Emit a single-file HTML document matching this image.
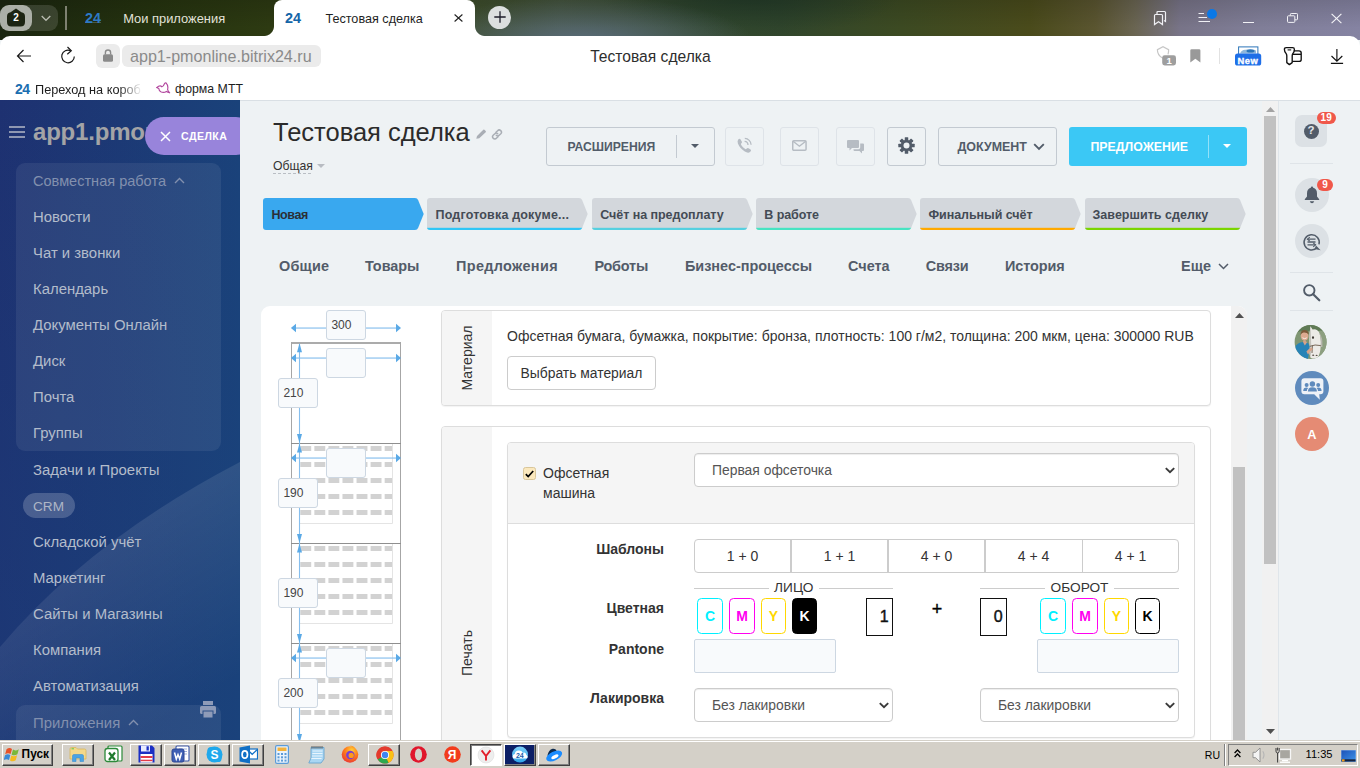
<!DOCTYPE html>
<html lang="ru">
<head>
<meta charset="utf-8">
<title>Тестовая сделка</title>
<style>
*{box-sizing:border-box;margin:0;padding:0}
html,body{width:1360px;height:768px;overflow:hidden;background:#eef2f4;font-family:"Liberation Sans",sans-serif;}
body{position:relative}
.abs{position:absolute}
.t{position:absolute;white-space:nowrap;line-height:1}
.f{position:absolute;white-space:nowrap;font-size:14px;line-height:20px;color:#333}
.dv{font-family:"DejaVu Sans Condensed","DejaVu Sans","Liberation Sans",sans-serif}
.ls{font-family:"Liberation Sans",sans-serif}

/* ===== browser chrome ===== */
#titlebar{left:0;top:0;width:1360px;height:40px;
 background:
  linear-gradient(180deg,rgba(0,0,0,.14) 0,rgba(0,0,0,0) 70%),
  radial-gradient(ellipse 170px 48px at 585px 44px, rgba(92,110,128,.95), rgba(92,110,128,0) 100%),
  radial-gradient(ellipse 150px 40px at 750px -4px, rgba(34,58,40,.9), rgba(34,58,40,0) 100%),
  linear-gradient(90deg,#1b2610 0px,#25330f 150px,#2d3a12 270px,#3d4d2c 480px,#43533a 560px,#34492f 700px,#31462c 780px,#3c4a22 900px,#4a4b1b 1030px,#5a5530 1095px,#6a6552 1135px,#787488 1180px,#807e98 1260px,#8583a2 1360px);}
#toolbar{left:0;top:36px;width:1360px;height:64px;background:#fff;border-radius:10px 10px 0 0}
#tab-active{left:274px;top:0;width:200px;height:40px;background:#fff;border-radius:0 0 0 0}
#pageline{left:0;top:100px;width:1360px;height:1px;background:#d9dfe4}

/* ===== sidebar ===== */
#sidebar{left:0;top:100px;width:240px;height:640px;overflow:hidden;
 background:linear-gradient(180deg,rgba(26,66,124,0) 0%,rgba(26,66,124,.45) 100%),linear-gradient(90deg,#1e3171 0%,#1c3975 50%,#1a427a 100%);}
.grp{position:absolute;left:16px;width:205px;background:rgba(255,255,255,.07);border-radius:9px}
.mi{position:absolute;left:33px;white-space:nowrap;line-height:1;color:#b3bccb;font-size:15px}

/* ===== main ===== */
#main{left:240px;top:101px;width:1022px;height:639px;background:#eef2f4}
#rightbar{left:1278px;top:101px;width:82px;height:639px;background:#eef2f4;border-left:1px solid #dfe5ea}

/* ===== taskbar ===== */
#taskbar{left:0;top:740px;width:1360px;height:28px;background:linear-gradient(#d4d0c8 0 1px,#fff 1px 2px,#d4d0c8 2px)}
.tb-btn{position:absolute;top:4px;height:22px;border:1px solid;border-color:#fff #404040 #404040 #fff;box-shadow:inset -1px -1px 0 #808080}
</style>
</head>
<body>
<div id="titlebar" class="abs"></div>
<div id="toolbar" class="abs"></div>
<div id="pageline" class="abs"></div>
<!-- ===== tab strip ===== -->
<div class="abs" style="left:0;top:5px;width:58px;height:26px;border-radius:9px;background:rgba(255,255,255,.13)"></div>
<div class="abs" style="left:0;top:5px;width:32px;height:26px;border-radius:9px;background:rgba(255,255,255,.58)"></div>
<svg class="abs" style="left:7px;top:8px" width="18" height="19" viewBox="0 0 18 19"><path d="M3.6 4.2 L9 0.6 L14.4 4.2 Q18 4.6 18 8.5 V14 Q18 18.6 13.5 18.6 H4.5 Q0 18.6 0 14 V8.5 Q0 4.6 3.6 4.2Z" fill="#1c2412"/></svg>
<span class="t" style="left:13.2px;top:12.8px;font-size:10px;font-weight:700;color:#fff">2</span>
<svg class="abs" style="left:41px;top:15px" width="10" height="7" viewBox="0 0 10 7"><path d="M0.7 1 L5 5.3 L9.3 1" fill="none" stroke="#b9bbb0" stroke-width="1.3"/></svg>
<div class="abs" style="left:65px;top:6px;width:1.6px;height:24px;background:#7e8171"></div>
<div class="abs" style="left:85px;top:22px;width:16px;height:1.4px;background:rgba(200,215,230,.25)"></div>
<span class="t" style="left:85px;top:10.8px;font-size:14.4px;font-weight:700;color:#2d7ac6">24</span>
<span class="t" style="left:123.2px;top:12.8px;font-size:12.9px;color:#e2e2d8">Мои приложения</span>
<!-- active tab -->
<div class="abs" style="left:274px;top:0;width:201px;height:40px;background:#fff;border-radius:8px 8px 0 0"></div>
<div class="abs" style="left:264px;top:26px;width:10px;height:10px;background:radial-gradient(circle at 0 0,rgba(255,255,255,0) 9.5px,#fff 10.5px)"></div>
<div class="abs" style="left:475px;top:26px;width:10px;height:10px;background:radial-gradient(circle at 100% 0,rgba(255,255,255,0) 9.5px,#fff 10.5px)"></div>
<span class="t" style="left:285px;top:10.6px;font-size:14.4px;font-weight:700;color:#1565a8">24</span>
<span class="t" style="left:325.4px;top:12.5px;font-size:12.63px;color:#1f1f1f">Тестовая сделка</span>
<svg class="abs" style="left:453.5px;top:14.4px" width="9" height="8" viewBox="0 0 9 8"><path d="M0.6 0.5 L8.4 7.5 M8.4 0.5 L0.6 7.5" stroke="#222" stroke-width="1.1"/></svg>
<div class="abs" style="left:488px;top:5.7px;width:23px;height:23px;border-radius:12px;background:#dcdfdf"></div>
<svg class="abs" style="left:493.5px;top:11.2px" width="12" height="12" viewBox="0 0 12 12"><path d="M6 0.3 V11.7 M0.3 6 H11.7" stroke="#1d1d2a" stroke-width="1.3"/></svg>
<!-- window controls -->
<svg class="abs" style="left:1152px;top:10px" width="16" height="16" viewBox="0 0 16 16"><path d="M5 4 V2.5 Q5 1.5 6 1.5 H12.5 Q13.5 1.5 13.5 2.5 V11.5 L12 10.5" fill="none" stroke="#f0f0f4" stroke-width="1.2"/><path d="M2.5 5.5 Q2.5 4.5 3.5 4.5 H9.5 Q10.5 4.5 10.5 5.5 V14.5 L6.5 11.8 L2.5 14.5Z" fill="none" stroke="#f0f0f4" stroke-width="1.2"/></svg>
<svg class="abs" style="left:1198px;top:11px" width="14" height="12" viewBox="0 0 14 12"><path d="M0.5 2.5 H6 M0.5 6.5 H9 M0.5 10.5 H12" stroke="#f0f0f5" stroke-width="1"/></svg>
<div class="abs" style="left:1206.5px;top:9px;width:10px;height:10px;border-radius:5px;background:#0a78e6"></div>
<div class="abs" style="left:1243px;top:22px;width:10.5px;height:1.2px;background:#f2f2f6"></div>
<svg class="abs" style="left:1287px;top:13px" width="11" height="10" viewBox="0 0 11 10"><path d="M3.4 2.6 V1.3 Q3.4 0.5 4.2 0.5 H9.7 Q10.5 0.5 10.5 1.3 V6 Q10.5 6.8 9.7 6.8 H8" fill="none" stroke="#f2f2f6" stroke-width="1"/><rect x="0.5" y="2.8" width="7.3" height="6.6" rx=".9" fill="none" stroke="#f2f2f6" stroke-width="1"/></svg>
<svg class="abs" style="left:1331px;top:13px" width="11" height="11" viewBox="0 0 11 11"><path d="M0.6 0.8 L10.4 10.2 M10.4 0.8 L0.6 10.2" stroke="#f4f4f8" stroke-width="1.15"/></svg>

<!-- ===== toolbar ===== -->
<svg class="abs" style="left:16px;top:49px" width="16" height="14" viewBox="0 0 16 14"><path d="M15 7 H1.5 M7.5 1 L1.5 7 L7.5 13" fill="none" stroke="#1a1a1a" stroke-width="1.2"/></svg>
<svg class="abs" style="left:60px;top:46px" width="16" height="18" viewBox="0 0 16 18"><path d="M14.3 10.5 A6.3 6.3 0 1 1 10.5 4.7" fill="none" stroke="#1a1a1a" stroke-width="1.2"/><path d="M7.5 1 L11.3 4.8 L7.3 8.2" fill="none" stroke="#1a1a1a" stroke-width="1.2"/></svg>
<div class="abs" style="left:96px;top:44px;width:24px;height:24px;border-radius:6px;background:#ebebeb"></div>
<svg class="abs" style="left:103px;top:49.3px" width="10" height="13" viewBox="0 0 10 13"><rect x="0" y="5.2" width="10" height="7.6" rx="1.6" fill="#8a8a8a"/><path d="M2.4 5.6 V3.6 a2.6 2.6 0 0 1 5.2 0 V5.6" fill="none" stroke="#8a8a8a" stroke-width="1.4"/></svg>
<div class="abs" style="left:122px;top:45px;width:199px;height:22px;border-radius:6px;background:#ebebeb"></div>
<span class="t" style="left:130px;top:48px;font-size:16.1px;color:#8a8a8a">app1-pmonline.bitrix24.ru</span>
<span class="t" style="left:590.2px;top:48.6px;font-size:15.62px;color:#2e2e2e">Тестовая сделка</span>
<!-- toolbar right icons -->
<svg class="abs" style="left:1156px;top:46px" width="21" height="20" viewBox="0 0 21 20"><path d="M7 12.3 Q1.2 9.5 1.4 3.6 L7 0.7 L12.6 3.6 Q12.7 6.5 12 8.4" fill="none" stroke="#c6c6c6" stroke-width="1.2"/><rect x="6.2" y="9.3" width="13.8" height="10.2" rx="2.4" fill="#9e9e9e"/></svg>
<span class="t" style="left:1166.6px;top:56.3px;font-size:9.5px;font-weight:700;color:#fff">1</span>
<svg class="abs" style="left:1189.8px;top:49.4px" width="11" height="14" viewBox="0 0 11 14"><path d="M0.3 1.6 Q0.3 0.3 1.6 0.3 H9.1 Q10.4 0.3 10.4 1.6 V13.4 L5.35 9.8 L0.3 13.4Z" fill="#999"/></svg>
<div class="abs" style="left:1219px;top:48px;width:1px;height:16px;background:#e2e2e2"></div>
<svg class="abs" style="left:1235px;top:45.5px" width="27" height="20" viewBox="0 0 27 20"><rect x="3.6" y="0.9" width="19.3" height="8" fill="#fff" stroke="#2b74b8" stroke-width="1"/><path d="M5 7.4 Q7 3.2 11 3.8 Q15 2 21 4.4 V7.4Z" fill="#8fb7dc"/><ellipse cx="15.5" cy="4.9" rx="4" ry="1.5" fill="#2b74b8"/><rect x="0" y="7.4" width="26.2" height="12.2" rx="2.6" fill="#1f6fe8"/></svg>
<span class="t" style="left:1237.6px;top:55.8px;font-size:9.4px;font-weight:700;color:#fff;letter-spacing:.45px;-webkit-text-stroke:.35px #fff">New</span>
<svg class="abs" style="left:1282.5px;top:46px" width="20" height="20" viewBox="0 0 20 20"><g fill="none" stroke="#111" stroke-width="1.35" stroke-linejoin="round"><path d="M3.2 1.6 H9.6 Q11.4 1.6 11.4 3.4 Q11.4 5.6 10 7.4 Q9.2 8.4 9.2 9.8 V16.6 L6.4 18.6 L3.8 16.6 V9.8 Q3.8 8.4 3 7.4 Q1.4 5.4 1.4 3.4 Q1.4 1.6 3.2 1.6Z"/><path d="M4.6 3.9 H8.2" stroke-width="1.1"/><path d="M10.8 4.8 H16 Q18.2 4.8 18.2 7 V13.4 Q18.2 15.4 16 15.4 H9.4"/><path d="M9.6 8.3 H18"/></g></svg>
<svg class="abs" style="left:1329.5px;top:48px" width="14" height="17" viewBox="0 0 14 17"><path d="M6.9 1 V13 M1.5 8 L6.9 13.2 L12.3 8 M0.9 15.3 H13.1" fill="none" stroke="#111" stroke-width="1.15"/></svg>

<!-- ===== bookmarks bar ===== -->
<span class="t" style="left:15px;top:81.5px;font-size:14px;font-weight:700;color:#1a6eb0;letter-spacing:-.6px">24</span>
<span class="t" style="left:35px;top:82px;font-size:12.73px;color:#1d1d1d;width:108px;overflow:hidden;height:15px;line-height:15px;-webkit-mask-image:linear-gradient(90deg,#000 78%,transparent 99%);mask-image:linear-gradient(90deg,#000 78%,transparent 99%)">Переход на короб</span>
<svg class="abs" style="left:156px;top:82px" width="15" height="13" viewBox="0 0 15 13"><path d="M0.6 5.6 L2.6 4.2 Q4.6 3.2 6 4.8 Q7.6 4.6 8.2 2.2 Q8.8 0.6 10 0.9 Q12.6 3.6 11.6 7.4 Q12 9.4 13.6 10.8 Q11.6 10.6 10.4 9.4 Q8 11 5.2 10 Q2.8 8.8 2.8 6.6 Z" fill="none" stroke="#b2479e" stroke-width="1.15" stroke-linejoin="round"/></svg>
<span class="t" style="left:175px;top:82.5px;font-size:12.34px;color:#1d1d1d">форма МТТ</span>

<div id="sidebar" class="abs">
<div class="abs" style="left:0;top:0;width:240px;height:640px;background:linear-gradient(150deg,rgba(255,255,255,.1) 62%,rgba(255,255,255,.0) 92%);clip-path:path('M0 547 Q90 440 240 362 V640 H0Z')"></div>
<div class="grp" style="top:63px;height:288px"></div>
<div class="grp" style="top:605px;height:60px"></div>
<div class="abs" style="left:9px;top:26px;width:16px;height:2px;background:#8e97b2"></div><div class="abs" style="left:9px;top:31px;width:16px;height:2px;background:#8e97b2"></div><div class="abs" style="left:9px;top:36px;width:16px;height:2px;background:#8e97b2"></div>
<span class="t" style="left:33px;top:20.1px;font-size:24px;font-weight:700;color:#a3a4a6;letter-spacing:-.2px">app1.pmonline</span>
<span class="mi" style="top:73.8px;font-size:14.54px;color:#8290ae">Совместная работа</span>
<svg class="abs" style="left:174px;top:77px" width="11" height="7" viewBox="0 0 11 7"><path d="M1 6 L5.5 1.5 L10 6" fill="none" stroke="#8290ae" stroke-width="1.4"/></svg>
<span class="mi" style="top:110.3px;font-size:14.9px">Новости</span>
<span class="mi" style="top:146.3px;font-size:14.9px">Чат и звонки</span>
<span class="mi" style="top:182.3px;font-size:14.9px">Календарь</span>
<span class="mi" style="top:218.3px;font-size:14.9px">Документы Онлайн</span>
<span class="mi" style="top:254.3px;font-size:14.9px">Диск</span>
<span class="mi" style="top:290.3px;font-size:14.9px">Почта</span>
<span class="mi" style="top:326.3px;font-size:14.9px">Группы</span>
<span class="mi" style="top:363.3px;font-size:14.9px">Задачи и Проекты</span>
<span class="mi" style="top:435.3px;font-size:14.9px">Складской учёт</span>
<span class="mi" style="top:471.3px;font-size:14.9px">Маркетинг</span>
<span class="mi" style="top:507.3px;font-size:14.9px">Сайты и Магазины</span>
<span class="mi" style="top:543.3px;font-size:14.9px">Компания</span>
<span class="mi" style="top:579.3px;font-size:14.9px">Автоматизация</span>
<div class="abs" style="left:23px;top:393px;width:52px;height:25px;border-radius:13px;background:rgba(255,255,255,.2)"></div>
<span class="mi" style="top:398.9px;font-size:13.6px;color:#aeb6c6;margin-top:1px">CRM</span>
<span class="mi" style="top:615.5px;font-size:14.92px;color:#8290ae">Приложения</span>
<svg class="abs" style="left:128px;top:619px" width="11" height="7" viewBox="0 0 11 7"><path d="M1 6 L5.5 1.5 L10 6" fill="none" stroke="#8290ae" stroke-width="1.4"/></svg>
<svg class="abs" style="left:200px;top:601px" width="16" height="17" viewBox="0 0 16 17"><rect x="3" y="0" width="10" height="4" fill="#8e9bb8"/><rect x="0" y="5" width="16" height="8" rx="1.5" fill="#8e9bb8"/><rect x="3" y="10" width="10" height="7" fill="#8e9bb8" stroke="#2a4f86" stroke-width="1"/></svg>
<div class="abs" style="left:145px;top:17px;width:110px;height:38px;border-radius:19px;background:#9884db"></div>
<svg class="abs" style="left:160px;top:31px" width="11" height="11" viewBox="0 0 11 11"><path d="M1 1 L10 10 M10 1 L1 10" stroke="#fff" stroke-width="1.5"/></svg>
<span class="t" style="left:181px;top:30.6px;font-size:10.6px;font-weight:700;color:#fff;letter-spacing:.45px">СДЕЛКА</span>
</div>
<div id="main" class="abs"></div>
<div id="rightbar" class="abs"></div>
<!--HDR-->
<span class="t" style="left:273.0px;top:119.8px;font-size:25.50px;color:#2b2b2b;">Тестовая сделка</span>
<svg class="abs" style="left:476px;top:129px" width="11" height="10" viewBox="0 0 11 10"><path d="M0.3 9.7 L1 7 L7.3 0.8 Q8 0.2 8.7 0.9 L9.7 1.9 Q10.3 2.6 9.7 3.2 L3.3 9.2 Z" fill="#a9aeb5"/></svg>
<svg class="abs" style="left:491px;top:128.5px" width="12" height="11" viewBox="0 0 12 11"><g fill="none" stroke="#a9aeb5" stroke-width="1.5" stroke-linecap="round"><path d="M5 3.2 L6.6 1.7 A2.1 2.1 0 0 1 9.8 4.7 L8.2 6.2 A2.1 2.1 0 0 1 5.3 6.3"/><path d="M7 7.8 L5.4 9.3 A2.1 2.1 0 0 1 2.2 6.3 L3.8 4.8 A2.1 2.1 0 0 1 6.7 4.7"/></g></svg>
<span class="t" style="left:273.0px;top:159.6px;font-size:12.23px;color:#333;">Общая</span>
<div class="abs" style="left:273px;top:172.5px;width:40px;height:1px;background:repeating-linear-gradient(90deg,#b9bec4 0 3px,transparent 3px 5px)"></div>
<svg class="abs" style="left:317px;top:164px" width="8" height="4" viewBox="0 0 8 4"><path d="M0 0 H8 L4 4Z" fill="#b8bcc2"/></svg>
<div class="abs" style="left:546px;top:127px;width:169px;height:39px;border:1px solid #c3cad1;border-radius:3px;background:transparent"></div>
<span class="t" style="left:567.4px;top:141.3px;font-size:12.18px;font-weight:700;color:#525c69;">РАСШИРЕНИЯ</span>
<div class="abs" style="left:676px;top:135px;width:1px;height:23px;background:#c3cad1"></div>
<svg class="abs" style="left:691px;top:144px" width="8" height="4" viewBox="0 0 8 4"><path d="M0 0 H8 L4 4Z" fill="#525c69"/></svg>
<div class="abs" style="left:725px;top:127px;width:39px;height:39px;border:1px solid #dee3e8;border-radius:3px;background:transparent"></div>
<div class="abs" style="left:780px;top:127px;width:39px;height:39px;border:1px solid #dee3e8;border-radius:3px;background:transparent"></div>
<div class="abs" style="left:836px;top:127px;width:39px;height:39px;border:1px solid #dee3e8;border-radius:3px;background:transparent"></div>
<div class="abs" style="left:887px;top:127px;width:39px;height:39px;border:1px solid #c3cad1;border-radius:3px;background:transparent"></div>
<svg class="abs" style="left:736px;top:137px" width="17" height="17" viewBox="0 0 17 17"><path d="M2.2 2.6 Q3.6 0.8 4.6 2.4 L5.9 4.7 Q6.3 5.6 5.4 6.3 Q4.6 7 5.2 8.1 Q6.6 10.6 9.2 12 Q10.1 12.4 10.7 11.6 Q11.5 10.6 12.5 11.2 L14.6 12.6 Q15.7 13.5 14.3 14.8 Q12.2 16.6 8.8 14.6 Q3.8 11.5 1.9 6.6 Q1.1 4.2 2.2 2.6Z" fill="#b6bcc3"/><path d="M8.6 4.4 A3.6 3.6 0 0 1 12 7.9" fill="none" stroke="#b6bcc3" stroke-width="1.3"/><path d="M8.8 1.4 A6.6 6.6 0 0 1 15.1 7.8" fill="none" stroke="#b6bcc3" stroke-width="1.3"/></svg>
<svg class="abs" style="left:792.2px;top:140px" width="14.8" height="11" viewBox="0 0 14 11" preserveAspectRatio="none"><rect x="0.7" y="0.7" width="12.6" height="9.6" rx="1" fill="none" stroke="#b6bcc3" stroke-width="1.4"/><path d="M1 1.2 L7 6.2 L13 1.2" fill="none" stroke="#b6bcc3" stroke-width="1.4"/></svg>
<svg class="abs" style="left:847px;top:140px" width="17" height="14" viewBox="0 0 17 14"><path d="M1 0 H11 Q12 0 12 1 V7 Q12 8 11 8 H5 L2.5 10.5 V8 H1 Q0 8 0 7 V1 Q0 0 1 0Z" fill="#b6bcc3"/><path d="M13.2 3.5 H16 Q17 3.5 17 4.5 V10 Q17 11 16 11 H15 V13.5 L12.5 11 H7.5 Q6.6 11 6.5 10 V9.2 H11.5 Q13.2 9.2 13.2 7.5Z" fill="#b6bcc3"/></svg>
<svg class="abs" style="left:897.6px;top:137.4px" width="17" height="17" viewBox="-8.5 -8.5 17 17"><g fill="#525c69"><circle r="5.7"/><g id="gt"><rect x="-1.75" y="-8.2" width="3.5" height="16.4" rx=".5"/></g><use href="#gt" transform="rotate(45)"/><use href="#gt" transform="rotate(90)"/><use href="#gt" transform="rotate(135)"/></g><circle r="3" fill="#eef2f4"/></svg>
<div class="abs" style="left:938px;top:127px;width:119px;height:39px;border:1px solid #c3cad1;border-radius:3px;background:transparent"></div>
<span class="t" style="left:957.5px;top:141.1px;font-size:12.45px;font-weight:700;color:#525c69;">ДОКУМЕНТ</span>
<svg class="abs" style="left:1033px;top:142.5px" width="12" height="8" viewBox="0 0 12 8"><path d="M1.2 1.2 L6 6 L10.8 1.2" fill="none" stroke="#525c69" stroke-width="1.9"/></svg>
<div class="abs" style="left:1069px;top:127px;width:178px;height:39px;border-radius:3px;background:#3bc8f5"></div>
<span class="t" style="left:1090.5px;top:141.2px;font-size:12.33px;font-weight:700;color:#fff;">ПРЕДЛОЖЕНИЕ</span>
<div class="abs" style="left:1208px;top:135px;width:1px;height:23px;background:rgba(255,255,255,.45)"></div>
<svg class="abs" style="left:1223px;top:144px" width="8" height="4" viewBox="0 0 8 4"><path d="M0 0 H8 L4 4Z" fill="#fff"/></svg>
<svg class="abs" style="left:263.0px;top:198px" width="161" height="32" viewBox="0 0 161 32"><path d="M3 0 H152 Q154.3 0 155.1 2 L160.7 16 L155.1 30 Q154.3 32 152 32 H3 Q0 32 0 29 V3 Q0 0 3 0Z" fill="#39a8ef"/></svg>
<span class="t" style="left:271.5px;top:208.7px;font-size:12.50px;font-weight:700;letter-spacing:-0.43px;color:#2b2f36;">Новая</span>
<svg class="abs" style="left:427.3px;top:198px" width="161" height="32" viewBox="0 0 161 32"><defs><clipPath id="sc1"><path d="M3 0 H152 Q154.3 0 155.1 2 L160.7 16 L155.1 30 Q154.3 32 152 32 H3 Q0 32 0 29 V3 Q0 0 3 0Z"/></clipPath></defs><g clip-path="url(#sc1)"><rect width="161" height="32" fill="#d3d7dc"/><rect y="29.8" width="156" height="2.2" fill="#2fc6f6"/></g></svg>
<span class="t" style="left:435.5px;top:208.7px;font-size:12.50px;font-weight:700;letter-spacing:0.18px;color:#444b55;">Подготовка докуме...</span>
<svg class="abs" style="left:591.6px;top:198px" width="161" height="32" viewBox="0 0 161 32"><defs><clipPath id="sc2"><path d="M3 0 H152 Q154.3 0 155.1 2 L160.7 16 L155.1 30 Q154.3 32 152 32 H3 Q0 32 0 29 V3 Q0 0 3 0Z"/></clipPath></defs><g clip-path="url(#sc2)"><rect width="161" height="32" fill="#d3d7dc"/><rect y="29.8" width="156" height="2.2" fill="#55d0e0"/></g></svg>
<span class="t" style="left:600.2px;top:208.7px;font-size:12.50px;font-weight:700;letter-spacing:-0.04px;color:#444b55;">Счёт на предоплату</span>
<svg class="abs" style="left:755.9px;top:198px" width="161" height="32" viewBox="0 0 161 32"><defs><clipPath id="sc3"><path d="M3 0 H152 Q154.3 0 155.1 2 L160.7 16 L155.1 30 Q154.3 32 152 32 H3 Q0 32 0 29 V3 Q0 0 3 0Z"/></clipPath></defs><g clip-path="url(#sc3)"><rect width="161" height="32" fill="#d3d7dc"/><rect y="29.8" width="156" height="2.2" fill="#47e4c2"/></g></svg>
<span class="t" style="left:764.3px;top:208.7px;font-size:12.50px;font-weight:700;letter-spacing:-0.07px;color:#444b55;">В работе</span>
<svg class="abs" style="left:920.2px;top:198px" width="161" height="32" viewBox="0 0 161 32"><defs><clipPath id="sc4"><path d="M3 0 H152 Q154.3 0 155.1 2 L160.7 16 L155.1 30 Q154.3 32 152 32 H3 Q0 32 0 29 V3 Q0 0 3 0Z"/></clipPath></defs><g clip-path="url(#sc4)"><rect width="161" height="32" fill="#d3d7dc"/><rect y="29.8" width="156" height="2.2" fill="#ffa900"/></g></svg>
<span class="t" style="left:928.4px;top:208.7px;font-size:12.50px;font-weight:700;letter-spacing:-0.05px;color:#444b55;">Финальный счёт</span>
<svg class="abs" style="left:1084.5px;top:198px" width="161" height="32" viewBox="0 0 161 32"><defs><clipPath id="sc5"><path d="M3 0 H152 Q154.3 0 155.1 2 L160.7 16 L155.1 30 Q154.3 32 152 32 H3 Q0 32 0 29 V3 Q0 0 3 0Z"/></clipPath></defs><g clip-path="url(#sc5)"><rect width="161" height="32" fill="#d3d7dc"/><rect y="29.8" width="156" height="2.2" fill="#7bd500"/></g></svg>
<span class="t" style="left:1092.5px;top:208.7px;font-size:12.50px;font-weight:700;letter-spacing:0.03px;color:#444b55;">Завершить сделку</span>
<span class="t" style="left:279.0px;top:259.3px;font-size:14.45px;font-weight:700;letter-spacing:0.19px;color:#535c69;">Общие</span>
<span class="t" style="left:365.0px;top:259.3px;font-size:14.45px;font-weight:700;letter-spacing:-0.04px;color:#535c69;">Товары</span>
<span class="t" style="left:456.0px;top:259.3px;font-size:14.45px;font-weight:700;letter-spacing:0.35px;color:#535c69;">Предложения</span>
<span class="t" style="left:594.4px;top:259.3px;font-size:14.45px;font-weight:700;letter-spacing:-0.21px;color:#535c69;">Роботы</span>
<span class="t" style="left:685.0px;top:259.3px;font-size:14.45px;font-weight:700;letter-spacing:-0.02px;color:#535c69;">Бизнес-процессы</span>
<span class="t" style="left:848.0px;top:259.3px;font-size:14.45px;font-weight:700;letter-spacing:0.01px;color:#535c69;">Счета</span>
<span class="t" style="left:925.8px;top:259.3px;font-size:14.45px;font-weight:700;letter-spacing:-0.20px;color:#535c69;">Связи</span>
<span class="t" style="left:1005.0px;top:259.3px;font-size:14.45px;font-weight:700;letter-spacing:-0.09px;color:#535c69;">История</span>
<span class="t" style="left:1181.0px;top:259.3px;font-size:14.45px;font-weight:700;letter-spacing:0.08px;color:#535c69;">Еще</span>
<svg class="abs" style="left:1218px;top:262.5px" width="11" height="7" viewBox="0 0 11 7"><path d="M1 1 L5.5 5.5 L10 1" fill="none" stroke="#535c69" stroke-width="1.5"/></svg>
<!--/HDR-->
<!--RIGHT-->
<div class="abs" style="left:1262px;top:101px;width:16px;height:639px;background:#f1f1f1"></div>
<div class="abs" style="left:1264px;top:116px;width:12px;height:448px;background:#c1c1c1"></div>
<svg class="abs" style="left:1265.5px;top:106.5px" width="9" height="5" viewBox="0 0 9 5"><path d="M0 5 L4.5 0 L9 5Z" fill="#a3a3a3"/></svg>
<svg class="abs" style="left:1265.5px;top:728.5px" width="9" height="5" viewBox="0 0 9 5"><path d="M0 0 L4.5 5 L9 0Z" fill="#505050"/></svg>
<div class="abs" style="left:1295px;top:115px;width:32px;height:32px;border-radius:7px;background:#dce1e5"></div>
<div class="abs" style="left:1303.5px;top:123.5px;width:15px;height:15px;border-radius:7.5px;background:#525c69"></div>
<span class="t" style="left:1307.5px;top:125.3px;font-size:11.5px;font-weight:700;color:#e4e8ec">?</span>
<div class="abs" style="left:1317px;top:112px;width:19px;height:12px;border-radius:6px;background:#f0584a"></div>
<span class="t" style="left:1320.6px;top:113.2px;font-size:10px;font-weight:700;color:#fff">19</span>
<div class="abs" style="left:1290px;top:163px;width:43px;height:1px;background:#dfe4e8"></div>
<div class="abs" style="left:1294.5px;top:178px;width:34px;height:34px;border-radius:17px;background:#dce1e5"></div>
<svg class="abs" style="left:1303.5px;top:186px" width="16" height="18" viewBox="0 0 16 18"><path d="M8 0.5 Q9.2 0.5 9.2 1.8 Q13 2.8 13 7.5 V10.5 L15.2 13.3 V14 H0.8 V13.3 L3 10.5 V7.5 Q3 2.8 6.8 1.8 Q6.8 0.5 8 0.5Z" fill="#525c69"/><path d="M5.8 15.2 H10.2 Q9.6 17.2 8 17.2 Q6.4 17.2 5.8 15.2Z" fill="#525c69"/></svg>
<div class="abs" style="left:1317px;top:179px;width:16px;height:12px;border-radius:6px;background:#f0584a"></div>
<span class="t" style="left:1322.3px;top:180.2px;font-size:10px;font-weight:700;color:#fff">9</span>
<div class="abs" style="left:1294.5px;top:224px;width:34px;height:34px;border-radius:17px;background:#dce1e5"></div>
<svg class="abs" style="left:1302px;top:231.5px" width="20" height="20" viewBox="0 0 20 20"><path d="M15.2 15.6 A7.6 7.6 0 1 1 17 12.4" fill="none" stroke="#525c69" stroke-width="1.5"/><path d="M14 13.5 L18.6 18.2 L12.6 17Z" fill="#525c69"/><path d="M5.5 7.2 H13.5 M5.5 10 H13.5 M5.5 12.8 H13.5" stroke="#525c69" stroke-width="1.3"/><path d="M7.8 5.2 L5.4 7.2 L7.8 9.2 M11.2 10.8 L13.6 12.8 L11.2 14.8" fill="none" stroke="#525c69" stroke-width="1.1"/></svg>
<div class="abs" style="left:1290px;top:272px;width:43px;height:1px;background:#dfe4e8"></div>
<svg class="abs" style="left:1302px;top:283px" width="19" height="19" viewBox="0 0 19 19"><circle cx="7.3" cy="7.3" r="5.2" fill="none" stroke="#525c69" stroke-width="1.9"/><path d="M11.2 11.2 L17.3 17.3" stroke="#525c69" stroke-width="2.2" stroke-linecap="round"/></svg>
<div class="abs" style="left:1290px;top:310px;width:43px;height:1px;background:#dfe4e8"></div>
<svg class="abs" style="left:1294px;top:325px" width="34" height="34" viewBox="0 0 34 34"><defs><clipPath id="avc"><ellipse cx="16.6" cy="17" rx="16" ry="17"/></clipPath></defs><g clip-path="url(#avc)"><rect width="34" height="34" fill="#7f9673"/><path d="M0 0 H34 V9 Q26 5 20 8 Q10 3 0 9Z" fill="#5f7a55"/><path d="M24 6 Q30 4 34 10 V34 H26Z" fill="#8d9f80"/><path d="M16.4 1.2 L18.6 4.6 Q23 3.4 25.4 8 Q27.6 14 26.6 22 Q26.4 29 23.4 33 Q19 34.6 16.4 32.4 Q14.8 27 15.6 20 Q14.8 12 16.4 1.2Z" fill="#eceae6"/><path d="M16.4 1.2 Q14.9 10 15.6 20 Q14.9 27 16.4 32.4 Q17.8 26 17.2 19 Q17 9 16.4 1.2Z" fill="#c4c2bc"/><path d="M25.4 8 Q29 12 28.4 22 L26.6 22 Q27.6 14 25.4 8Z" fill="#b9b7b0"/><ellipse cx="19" cy="12.6" rx="1" ry="1.3" fill="#3a342e"/><ellipse cx="19.2" cy="30.2" rx="1.1" ry=".8" fill="#5a524a"/><ellipse cx="22.6" cy="30.4" rx="1" ry=".7" fill="#5a524a"/><path d="M15.6 21.4 Q21 19 26.8 20.6 M18.4 20.4 L18 28" fill="none" stroke="#6b5a4a" stroke-width=".9"/><path d="M0.5 23 Q3 17.6 9 17 L13 17.6 Q16 19.4 15.6 24 L14 34 H1Z" fill="#2783b6"/><path d="M9 17 L10.8 20.6 L13 17.6 L11.4 15.4 L9.4 15.4Z" fill="#d6a288"/><ellipse cx="10.6" cy="11" rx="3.9" ry="4.7" fill="#dcaa90"/><path d="M6.5 10 Q6.4 5 10.6 5 Q14.8 5 14.7 9.6 Q12.6 7.2 9.6 7.6 Q7.6 8 6.5 10Z" fill="#7b5b3a"/><path d="M8.4 12.8 Q10.6 14.6 12.8 12.8" fill="none" stroke="#fff" stroke-width=".8"/><path d="M12.4 26.5 Q15 23 18 22.4 L18.6 24.6 Q16 26 14 29.5Z" fill="#d6a288"/></g></svg>
<div class="abs" style="left:1294.5px;top:371px;width:34px;height:34px;border-radius:17px;background:#5f8bbd"></div>
<svg class="abs" style="left:1300.5px;top:378px" width="23" height="23" viewBox="0 0 23 23"><path d="M3.4 0.3 H19.4 Q22.4 0.3 22.4 3.3 V13.3 Q22.4 16.3 19.4 16.3 H18.2 L18.8 21.8 L13.2 16.3 H3.4 Q0.4 16.3 0.4 13.3 V3.3 Q0.4 0.3 3.4 0.3Z" fill="#eef2f7"/><g fill="#5f8bbd"><circle cx="11.4" cy="6" r="2.7"/><path d="M6.9 13.6 Q6.9 9.3 11.4 9.3 Q15.9 9.3 15.9 13.6Z"/><circle cx="5.6" cy="6.9" r="2"/><path d="M2.2 13 Q2.2 9.6 5.6 9.6 Q6.7 9.6 7.3 10 Q5.8 11.2 5.8 13Z"/><circle cx="17.2" cy="6.9" r="2"/><path d="M20.6 13 Q20.6 9.6 17.2 9.6 Q16.1 9.6 15.5 10 Q17 11.2 17 13Z"/></g></svg>
<div class="abs" style="left:1294.5px;top:417px;width:34px;height:34px;border-radius:17px;background:#e58b74"></div>
<span class="t" style="left:1307.2px;top:429.2px;font-size:12.8px;font-weight:700;color:#fff">A</span>
<!--/RIGHT-->
<!--CONTENT-->
<div class="abs" style="left:261px;top:306px;width:986px;height:434px;background:#fff;border-radius:9px 9px 0 0;overflow:hidden">
<div class="abs" style="left:970px;top:0;width:16px;height:434px;background:#f1f1f1"></div>
<div class="abs" style="left:972px;top:161px;width:12px;height:274px;background:#c1c1c1"></div>
<svg class="abs" style="left:973.5px;top:6.5px" width="9" height="5" viewBox="0 0 9 5"><path d="M0 5 L4.5 0 L9 5Z" fill="#505050"/></svg>
</div>
<svg class="abs" style="left:261px;top:306px" width="180" height="434" viewBox="0 0 180 434"><rect x="30" y="36" width="110" height="2" fill="#ababab"/><rect x="30" y="36" width="1" height="400" fill="#a6a6a6"/><rect x="139" y="36" width="1" height="400" fill="#a6a6a6"/><g fill="#d2d2d2"><rect x="39.30" y="140" width="10.90" height="5"/><rect x="53.36" y="140" width="10.90" height="5"/><rect x="67.42" y="140" width="10.90" height="5"/><rect x="81.48" y="140" width="10.90" height="5"/><rect x="95.54" y="140" width="10.90" height="5"/><rect x="109.60" y="140" width="10.90" height="5"/><rect x="123.66" y="140" width="8.14" height="5"/><rect x="39.30" y="156" width="10.90" height="5"/><rect x="53.36" y="156" width="10.90" height="5"/><rect x="67.42" y="156" width="10.90" height="5"/><rect x="81.48" y="156" width="10.90" height="5"/><rect x="95.54" y="156" width="10.90" height="5"/><rect x="109.60" y="156" width="10.90" height="5"/><rect x="123.66" y="156" width="8.14" height="5"/><rect x="39.30" y="172" width="10.90" height="5"/><rect x="53.36" y="172" width="10.90" height="5"/><rect x="67.42" y="172" width="10.90" height="5"/><rect x="81.48" y="172" width="10.90" height="5"/><rect x="95.54" y="172" width="10.90" height="5"/><rect x="109.60" y="172" width="10.90" height="5"/><rect x="123.66" y="172" width="8.14" height="5"/><rect x="39.30" y="188" width="10.90" height="5"/><rect x="53.36" y="188" width="10.90" height="5"/><rect x="67.42" y="188" width="10.90" height="5"/><rect x="81.48" y="188" width="10.90" height="5"/><rect x="95.54" y="188" width="10.90" height="5"/><rect x="109.60" y="188" width="10.90" height="5"/><rect x="123.66" y="188" width="8.14" height="5"/><rect x="39.30" y="204" width="10.90" height="5"/><rect x="53.36" y="204" width="10.90" height="5"/><rect x="67.42" y="204" width="10.90" height="5"/><rect x="81.48" y="204" width="10.90" height="5"/><rect x="95.54" y="204" width="10.90" height="5"/><rect x="109.60" y="204" width="10.90" height="5"/><rect x="123.66" y="204" width="8.14" height="5"/></g><path d="M131.5 138 V217.5 H39" fill="none" stroke="#e4e4e4" stroke-width="1"/><rect x="30" y="137" width="110" height="1" fill="#8f8f8f"/><g fill="#d2d2d2"><rect x="39.30" y="240" width="10.90" height="5"/><rect x="53.36" y="240" width="10.90" height="5"/><rect x="67.42" y="240" width="10.90" height="5"/><rect x="81.48" y="240" width="10.90" height="5"/><rect x="95.54" y="240" width="10.90" height="5"/><rect x="109.60" y="240" width="10.90" height="5"/><rect x="123.66" y="240" width="8.14" height="5"/><rect x="39.30" y="256" width="10.90" height="5"/><rect x="53.36" y="256" width="10.90" height="5"/><rect x="67.42" y="256" width="10.90" height="5"/><rect x="81.48" y="256" width="10.90" height="5"/><rect x="95.54" y="256" width="10.90" height="5"/><rect x="109.60" y="256" width="10.90" height="5"/><rect x="123.66" y="256" width="8.14" height="5"/><rect x="39.30" y="272" width="10.90" height="5"/><rect x="53.36" y="272" width="10.90" height="5"/><rect x="67.42" y="272" width="10.90" height="5"/><rect x="81.48" y="272" width="10.90" height="5"/><rect x="95.54" y="272" width="10.90" height="5"/><rect x="109.60" y="272" width="10.90" height="5"/><rect x="123.66" y="272" width="8.14" height="5"/><rect x="39.30" y="288" width="10.90" height="5"/><rect x="53.36" y="288" width="10.90" height="5"/><rect x="67.42" y="288" width="10.90" height="5"/><rect x="81.48" y="288" width="10.90" height="5"/><rect x="95.54" y="288" width="10.90" height="5"/><rect x="109.60" y="288" width="10.90" height="5"/><rect x="123.66" y="288" width="8.14" height="5"/><rect x="39.30" y="304" width="10.90" height="5"/><rect x="53.36" y="304" width="10.90" height="5"/><rect x="67.42" y="304" width="10.90" height="5"/><rect x="81.48" y="304" width="10.90" height="5"/><rect x="95.54" y="304" width="10.90" height="5"/><rect x="109.60" y="304" width="10.90" height="5"/><rect x="123.66" y="304" width="8.14" height="5"/></g><path d="M131.5 238 V317.5 H39" fill="none" stroke="#e4e4e4" stroke-width="1"/><rect x="30" y="237" width="110" height="1" fill="#8f8f8f"/><g fill="#d2d2d2"><rect x="39.30" y="340" width="10.90" height="5"/><rect x="53.36" y="340" width="10.90" height="5"/><rect x="67.42" y="340" width="10.90" height="5"/><rect x="81.48" y="340" width="10.90" height="5"/><rect x="95.54" y="340" width="10.90" height="5"/><rect x="109.60" y="340" width="10.90" height="5"/><rect x="123.66" y="340" width="8.14" height="5"/><rect x="39.30" y="356" width="10.90" height="5"/><rect x="53.36" y="356" width="10.90" height="5"/><rect x="67.42" y="356" width="10.90" height="5"/><rect x="81.48" y="356" width="10.90" height="5"/><rect x="95.54" y="356" width="10.90" height="5"/><rect x="109.60" y="356" width="10.90" height="5"/><rect x="123.66" y="356" width="8.14" height="5"/><rect x="39.30" y="372" width="10.90" height="5"/><rect x="53.36" y="372" width="10.90" height="5"/><rect x="67.42" y="372" width="10.90" height="5"/><rect x="81.48" y="372" width="10.90" height="5"/><rect x="95.54" y="372" width="10.90" height="5"/><rect x="109.60" y="372" width="10.90" height="5"/><rect x="123.66" y="372" width="8.14" height="5"/><rect x="39.30" y="388" width="10.90" height="5"/><rect x="53.36" y="388" width="10.90" height="5"/><rect x="67.42" y="388" width="10.90" height="5"/><rect x="81.48" y="388" width="10.90" height="5"/><rect x="95.54" y="388" width="10.90" height="5"/><rect x="109.60" y="388" width="10.90" height="5"/><rect x="123.66" y="388" width="8.14" height="5"/><rect x="39.30" y="404" width="10.90" height="5"/><rect x="53.36" y="404" width="10.90" height="5"/><rect x="67.42" y="404" width="10.90" height="5"/><rect x="81.48" y="404" width="10.90" height="5"/><rect x="95.54" y="404" width="10.90" height="5"/><rect x="109.60" y="404" width="10.90" height="5"/><rect x="123.66" y="404" width="8.14" height="5"/></g><path d="M131.5 338 V417.5 H39" fill="none" stroke="#e4e4e4" stroke-width="1"/><rect x="30" y="337" width="110" height="1" fill="#8f8f8f"/><rect x="37.95" y="38" width="1.1" height="398" fill="#86beed"/><path d="M38.5 37.2 L36 46.2 L41 46.2 Z" fill="#5aa9e6"/><path d="M38.5 137.5 L36 146.5 L41 146.5 Z" fill="#5aa9e6"/><path d="M38.5 237.5 L36 246.5 L41 246.5 Z" fill="#5aa9e6"/><path d="M38.5 337.5 L36 346.5 L41 346.5 Z" fill="#5aa9e6"/><path d="M38.5 137 L36 128 L41 128 Z" fill="#5aa9e6"/><path d="M38.5 237 L36 228 L41 228 Z" fill="#5aa9e6"/><path d="M38.5 337 L36 328 L41 328 Z" fill="#5aa9e6"/><path d="M38.5 437 L36 428 L41 428 Z" fill="#5aa9e6"/><rect x="34.5" y="21.475" width="101" height="1.15" fill="#86beed"/><path d="M29.9 22.05 L35 17.85 L35 26.25 Z" fill="#5aa9e6"/><path d="M140 22.05 L135 17.85 L135 26.25 Z" fill="#5aa9e6"/><rect x="34.5" y="51.475" width="101" height="1.15" fill="#86beed"/><path d="M29.9 52.05 L35 47.85 L35 56.25 Z" fill="#5aa9e6"/><path d="M140 52.05 L135 47.85 L135 56.25 Z" fill="#5aa9e6"/><rect x="34.5" y="151.475" width="101" height="1.15" fill="#86beed"/><path d="M29.9 152.05 L35 147.85 L35 156.25 Z" fill="#5aa9e6"/><path d="M140 152.05 L135 147.85 L135 156.25 Z" fill="#5aa9e6"/><rect x="34.5" y="351.475" width="101" height="1.15" fill="#86beed"/><path d="M29.9 352.05 L35 347.85 L35 356.25 Z" fill="#5aa9e6"/><path d="M140 352.05 L135 347.85 L135 356.25 Z" fill="#5aa9e6"/></svg>
<div class="abs" style="left:326px;top:310px;width:40px;height:30px;background:#f8fafc;border:1px solid #cdd7e2;border-radius:3px"><span class="t" style="left:4.4px;top:7.7px;font-size:12px;color:#444">300</span></div>
<div class="abs" style="left:326px;top:348px;width:40px;height:30px;background:#f8fafc;border:1px solid #cdd7e2;border-radius:3px"></div>
<div class="abs" style="left:326px;top:448px;width:40px;height:30px;background:#f8fafc;border:1px solid #cdd7e2;border-radius:3px"></div>
<div class="abs" style="left:326px;top:648px;width:40px;height:30px;background:#f8fafc;border:1px solid #cdd7e2;border-radius:3px"></div>
<div class="abs" style="left:278px;top:378px;width:40px;height:30px;background:#f8fafc;border:1px solid #cdd7e2;border-radius:3px"><span class="t" style="left:4.4px;top:7.7px;font-size:12px;color:#444">210</span></div>
<div class="abs" style="left:278px;top:478px;width:40px;height:30px;background:#f8fafc;border:1px solid #cdd7e2;border-radius:3px"><span class="t" style="left:4.4px;top:7.7px;font-size:12px;color:#444">190</span></div>
<div class="abs" style="left:278px;top:578px;width:40px;height:30px;background:#f8fafc;border:1px solid #cdd7e2;border-radius:3px"><span class="t" style="left:4.4px;top:7.7px;font-size:12px;color:#444">190</span></div>
<div class="abs" style="left:278px;top:678px;width:40px;height:30px;background:#f8fafc;border:1px solid #cdd7e2;border-radius:3px"><span class="t" style="left:4.4px;top:7.7px;font-size:12px;color:#444">200</span></div>
<div class="abs" style="left:441px;top:310px;width:770px;height:96px;background:#fff;border:1px solid #ddd;border-radius:4px;box-shadow:0 1px 1px rgba(0,0,0,.05);overflow:hidden"><div class="abs" style="left:0;top:0;width:50px;height:100%;background:#f5f5f5"></div></div>
<span class="f" style="left:466.8px;top:358.2px;transform:translate(-50%,-50%) rotate(-90deg)">Материал</span>
<span class="f" style="left:507px;top:326px;font-size:13.99px">Офсетная бумага, бумажка, покрытие: бронза, плотность: 100 г/м2, толщина: 200 мкм, цена: 300000 RUB</span>
<div class="abs" style="left:507px;top:356px;width:149px;height:34px;border:1px solid #ccc;border-radius:4px;background:#fff"></div>
<span class="f" style="left:520.5px;top:363px;font-size:13.89px">Выбрать материал</span>
<div class="abs" style="left:441px;top:426px;width:770px;height:330px;background:#fff;border:1px solid #ddd;border-radius:4px;box-shadow:0 1px 1px rgba(0,0,0,.05);overflow:hidden"><div class="abs" style="left:0;top:0;width:50px;height:100%;background:#f5f5f5"></div></div>
<span class="f" style="left:466.8px;top:652.6px;transform:translate(-50%,-50%) rotate(-90deg)">Печать</span>
<div class="abs" style="left:507px;top:442px;width:688px;height:296px;background:#fff;border:1px solid #ddd;border-radius:4px;box-shadow:0 1px 1px rgba(0,0,0,.05);overflow:hidden"><div class="abs" style="left:0;top:0;width:100%;height:81px;background:#f5f5f5;border-bottom:1px solid #ddd"></div></div>
<div class="abs" style="left:523px;top:467px;width:13px;height:13px;background:#fbe8bd;border:1px solid #d9c69a;border-radius:2.5px"></div>
<svg class="abs" style="left:525px;top:469.5px" width="9" height="8" viewBox="0 0 9 8"><path d="M0.8 4.2 L3.2 6.6 L8.2 1" fill="none" stroke="#000" stroke-width="1.7"/></svg>
<span class="f" style="left:543px;top:463px">Офсетная</span>
<span class="f" style="left:543px;top:483px">машина</span>
<div class="abs" style="left:694px;top:453px;width:485px;height:34px;border:1px solid #ccc;border-radius:4px;background:#fff;box-shadow:inset 0 1px 1px rgba(0,0,0,.075)"></div><span class="f" style="left:712px;top:460px;color:#555;font-size:13.88px">Первая офсеточка</span><svg class="abs" style="left:1164.8px;top:466.7px" width="10" height="7" viewBox="0 0 10 7"><path d="M0.8 1.1 L5 5.2 L9.2 1.1" fill="none" stroke="#3a3a3a" stroke-width="1.9"/></svg>
<span class="f" style="right:696px;top:539px;font-weight:700">Шаблоны</span>
<span class="f" style="right:696px;top:598px;font-weight:700">Цветная</span>
<span class="f" style="right:696px;top:639px;font-weight:700">Pantone</span>
<span class="f" style="right:696px;top:688px;font-weight:700">Лакировка</span>
<div class="abs" style="left:694px;top:539px;width:485px;height:34px;border:1px solid #ccc;border-radius:4px;background:#fff"></div>
<span class="f" style="left:694px;top:546px;width:97px;text-align:center">1 + 0</span>
<div class="abs" style="left:790.2px;top:540px;width:1.6px;height:32px;background:#ccc"></div>
<span class="f" style="left:791px;top:546px;width:97px;text-align:center">1 + 1</span>
<div class="abs" style="left:887.3px;top:540px;width:1.6px;height:32px;background:#ccc"></div>
<span class="f" style="left:888px;top:546px;width:97px;text-align:center">4 + 0</span>
<div class="abs" style="left:984.4px;top:540px;width:1.6px;height:32px;background:#ccc"></div>
<span class="f" style="left:985px;top:546px;width:97px;text-align:center">4 + 4</span>
<div class="abs" style="left:1081.5px;top:540px;width:1.6px;height:32px;background:#ccc"></div>
<span class="f" style="left:1082px;top:546px;width:97px;text-align:center">4 + 1</span>
<div class="abs" style="left:694px;top:588px;width:74.5px;height:1px;background:#ccc"></div><div class="abs" style="left:819px;top:588px;width:74px;height:1px;background:#ccc"></div><span class="f" style="left:768.5px;top:578px;width:50.5px;text-align:center;font-size:13.7px">ЛИЦО</span>
<div class="abs" style="left:980px;top:588px;width:65px;height:1px;background:#ccc"></div><div class="abs" style="left:1114px;top:588px;width:65px;height:1px;background:#ccc"></div><span class="f" style="left:1045px;top:578px;width:69px;text-align:center;font-size:13.7px">ОБОРОТ</span>
<div class="abs" style="left:697px;top:598px;width:26px;height:36px;border:1px solid #00f0ff;border-radius:4.5px;background:#fff"></div><span class="f" style="left:697px;top:606px;width:26px;text-align:center;font-weight:700;color:#00f0ff">C</span>
<div class="abs" style="left:729px;top:598px;width:26px;height:36px;border:1px solid #ff00f0;border-radius:4.5px;background:#fff"></div><span class="f" style="left:729px;top:606px;width:26px;text-align:center;font-weight:700;color:#ff00f0">M</span>
<div class="abs" style="left:761px;top:598px;width:25px;height:36px;border:1px solid #ffd800;border-radius:4.5px;background:#fff"></div><span class="f" style="left:761px;top:606px;width:25px;text-align:center;font-weight:700;color:#ffd800">Y</span>
<div class="abs" style="left:792px;top:598px;width:25px;height:36px;border:1px solid #000;border-radius:4.5px;background:#000"></div><span class="f" style="left:792px;top:606px;width:25px;text-align:center;font-weight:700;color:#fff">K</span>
<div class="abs" style="left:1040px;top:598px;width:26px;height:36px;border:1px solid #00f0ff;border-radius:4.5px;background:#fff"></div><span class="f" style="left:1040px;top:606px;width:26px;text-align:center;font-weight:700;color:#00f0ff">C</span>
<div class="abs" style="left:1072px;top:598px;width:26px;height:36px;border:1px solid #ff00f0;border-radius:4.5px;background:#fff"></div><span class="f" style="left:1072px;top:606px;width:26px;text-align:center;font-weight:700;color:#ff00f0">M</span>
<div class="abs" style="left:1104px;top:598px;width:25px;height:36px;border:1px solid #ffd800;border-radius:4.5px;background:#fff"></div><span class="f" style="left:1104px;top:606px;width:25px;text-align:center;font-weight:700;color:#ffd800">Y</span>
<div class="abs" style="left:1135px;top:598px;width:25px;height:36px;border:1px solid #000;border-radius:4.5px;background:#fff"></div><span class="f" style="left:1135px;top:606px;width:25px;text-align:center;font-weight:700;color:#000">K</span>
<div class="abs" style="left:866px;top:598px;width:27px;height:38px;border:1px solid #111;background:#fff"></div><span class="f" style="left:866px;top:607px;width:22.6px;text-align:right;font-size:16px;color:#111;-webkit-text-stroke:.4px #111">1</span>
<div class="abs" style="left:980px;top:598px;width:27px;height:38px;border:1px solid #111;background:#fff"></div><span class="f" style="left:980px;top:607px;width:22.6px;text-align:right;font-size:16px;color:#111;-webkit-text-stroke:.4px #111">0</span>
<span class="f" style="left:926.9px;top:599.2px;width:20px;text-align:center;font-size:18px;color:#000;-webkit-text-stroke:.35px #000">+</span>
<div class="abs" style="left:694px;top:639px;width:142px;height:34px;background:#f8fafc;border:1px solid #cdd7e2;border-radius:2px"></div>
<div class="abs" style="left:1037px;top:639px;width:142px;height:34px;background:#f8fafc;border:1px solid #cdd7e2;border-radius:2px"></div>
<div class="abs" style="left:694px;top:688px;width:199px;height:34px;border:1px solid #ccc;border-radius:4px;background:#fff;box-shadow:inset 0 1px 1px rgba(0,0,0,.075)"></div><span class="f" style="left:712px;top:695px;color:#555;font-size:13.88px">Без лакировки</span><svg class="abs" style="left:878.8px;top:701.7px" width="10" height="7" viewBox="0 0 10 7"><path d="M0.8 1.1 L5 5.2 L9.2 1.1" fill="none" stroke="#3a3a3a" stroke-width="1.9"/></svg>
<div class="abs" style="left:980px;top:688px;width:199px;height:34px;border:1px solid #ccc;border-radius:4px;background:#fff;box-shadow:inset 0 1px 1px rgba(0,0,0,.075)"></div><span class="f" style="left:998px;top:695px;color:#555;font-size:13.88px">Без лакировки</span><svg class="abs" style="left:1164.8px;top:701.7px" width="10" height="7" viewBox="0 0 10 7"><path d="M0.8 1.1 L5 5.2 L9.2 1.1" fill="none" stroke="#3a3a3a" stroke-width="1.9"/></svg>
<!--/CONTENT-->
<div id="taskbar" class="abs">
<!--TB-->
<div class="abs" style="left:2px;top:4px;width:51px;height:22px;background:#d4d0c8;border:1px solid;border-color:#fff #404040 #404040 #fff;box-shadow:inset -1px -1px 0 #808080"></div>
<svg class="abs" style="left:4px;top:7px" width="17" height="15" viewBox="0 0 17 15"><path d="M2.5 2.2 Q5.5 0 8 2 L6.6 7 Q4 5.2 1.2 7.2Z" fill="#e8532a"/><path d="M9 2.6 Q11.5 4.4 14.8 2.2 L13.4 7.2 Q10.4 9.2 7.6 7.4Z" fill="#7ab83a"/><path d="M1 8.2 Q3.8 6.2 6.3 8 L5 13 Q2.4 11.2 -0.4 13.2Z" fill="#3a8ad8"/><path d="M7.3 8.5 Q10 10.3 13.1 8.2 L11.7 13.2 Q8.8 15.2 6 13.4Z" fill="#f5bb20"/></svg>
<span class="t" style="left:21.6px;top:8.5px;font-size:11.88px;font-weight:700;color:#000;">Пуск</span>
<div class="abs" style="left:62px;top:4px;width:32px;height:22px;background:#d4d0c8;border:1px solid;border-color:#fff #404040 #404040 #fff;box-shadow:inset -1px -1px 0 #808080"></div>
<svg class="abs" style="left:69px;top:6px" width="18" height="17" viewBox="0 0 18 17"><path d="M1 3 Q1 1.5 2.5 1.5 H7 L8.5 3 H15.5 Q17 3 17 4.5 V13 H1Z" fill="#f3d88a" stroke="#d9b75a" stroke-width=".8"/><rect x="2.5" y="2.3" width="2.5" height="1" fill="#5c5"/><path d="M3.5 15.5 V10 Q3.5 8.5 5 8.5 H13 Q14.5 8.5 14.5 10 V15.5 H11 V12 H7 V15.5Z" fill="#4aa3e4" stroke="#3b8fd0" stroke-width=".6"/></svg>
<svg class="abs" style="left:104px;top:5px" width="19" height="19" viewBox="0 0 19 19"><rect x="4" y="1" width="14" height="15" rx="1" fill="#fff" stroke="#2c8a3a" stroke-width="1.2"/><rect x="1" y="3.5" width="13" height="13" rx="2.5" fill="#fff" stroke="#2c8a3a" stroke-width="1.3"/><path d="M5 7.5 L11 15 M11 7.5 L5 15" stroke="#1f7a2e" stroke-width="2.2"/></svg>
<div class="abs" style="left:130px;top:4px;width:32px;height:22px;background:#d4d0c8;border:1px solid;border-color:#fff #404040 #404040 #fff;box-shadow:inset -1px -1px 0 #808080"></div>
<svg class="abs" style="left:138px;top:5px" width="17" height="18" viewBox="0 0 17 18"><path d="M0.5 0.5 H14 L16.5 3 V17.5 H0.5Z" fill="#1b2fc4"/><rect x="3" y="0.5" width="9" height="6" fill="#e9ecff"/><rect x="8.5" y="1.3" width="2.3" height="4.2" fill="#1b2fc4"/><rect x="2.5" y="9" width="12" height="8.5" fill="#fff"/><rect x="2.5" y="11" width="12" height="2" fill="#e23b4a"/><rect x="2.5" y="14.7" width="12" height="1.5" fill="#e23b4a"/></svg>
<div class="abs" style="left:164px;top:4px;width:32px;height:22px;background:#d4d0c8;border:1px solid;border-color:#fff #404040 #404040 #fff;box-shadow:inset -1px -1px 0 #808080"></div>
<svg class="abs" style="left:171px;top:5px" width="19" height="19" viewBox="0 0 19 19"><rect x="5" y="1" width="13" height="15" rx="1" fill="#fff" stroke="#3a57a8" stroke-width="1.1"/><path d="M8 4 H16 M8 6.5 H16 M8 9 H16" stroke="#9fb0dc" stroke-width="1"/><rect x="1" y="4" width="12" height="13" rx="2" fill="#3f5fb4" stroke="#2b4694" stroke-width="1"/><path d="M3.5 7.5 L5.3 14 L7 9.5 L8.7 14 L10.5 7.5" fill="none" stroke="#fff" stroke-width="1.5"/></svg>
<div class="abs" style="left:198px;top:4px;width:32px;height:22px;background:#d4d0c8;border:1px solid;border-color:#fff #404040 #404040 #fff;box-shadow:inset -1px -1px 0 #808080"></div>
<svg class="abs" style="left:206px;top:6px" width="17" height="17" viewBox="0 0 17 17"><circle cx="8.5" cy="8.5" r="8" fill="#1fa8ec"/><circle cx="5" cy="4.6" r="3.6" fill="#1fa8ec"/><circle cx="12" cy="12.4" r="3.6" fill="#1fa8ec"/></svg>
<span class="t" style="left:210.4px;top:8.8px;font-size:12px;font-weight:700;color:#fff">S</span>
<div class="abs" style="left:232px;top:4px;width:32px;height:22px;background:#d4d0c8;border:1px solid;border-color:#fff #404040 #404040 #fff;box-shadow:inset -1px -1px 0 #808080"></div>
<svg class="abs" style="left:239px;top:5px" width="19" height="19" viewBox="0 0 19 19"><rect x="8" y="4" width="10.5" height="10" fill="#fff" stroke="#0f6fc6" stroke-width="1.2"/><path d="M8.5 4.8 L13.2 9.3 L18 4.8" fill="none" stroke="#0f6fc6" stroke-width="1.2"/><path d="M0.5 2.6 L11 0.6 V18.4 L0.5 16.4Z" fill="#0f6fc6"/><ellipse cx="5.8" cy="9.5" rx="2.7" ry="3.6" fill="none" stroke="#fff" stroke-width="1.7"/></svg>
<svg class="abs" style="left:275px;top:5px" width="14" height="19" viewBox="0 0 14 19"><rect x="0.6" y="0.6" width="12.8" height="17.8" rx="1.3" fill="#eaf3fc" stroke="#5b9bd8" stroke-width="1.2"/><rect x="2.5" y="2.5" width="9" height="3.5" fill="#f3b23a"/><g fill="#5b9bd8"><rect x="2.5" y="8" width="2" height="2"/><rect x="6" y="8" width="2" height="2"/><rect x="9.5" y="8" width="2" height="2"/><rect x="2.5" y="11.3" width="2" height="2"/><rect x="6" y="11.3" width="2" height="2"/><rect x="9.5" y="11.3" width="2" height="2"/><rect x="2.5" y="14.6" width="2" height="2"/><rect x="6" y="14.6" width="2" height="2"/><rect x="9.5" y="14.6" width="2" height="2"/></g></svg>
<svg class="abs" style="left:308px;top:5px" width="17" height="19" viewBox="0 0 17 19"><path d="M3 2.5 H16 V14 L13 18 H0.8 L3 13Z" fill="#a9d6f3" stroke="#6aa6d0" stroke-width=".9"/><path d="M4.5 6 H14.5 M4.3 8.5 H14.5 M4 11 H14.5 M3.4 13.5 H13.6" stroke="#e9f5fd" stroke-width="1"/><path d="M4 1 V3.8 M6 1 V3.8 M8 1 V3.8 M10 1 V3.8 M12 1 V3.8 M14 1 V3.8" stroke="#555" stroke-width=".9"/></svg>
<svg class="abs" style="left:341px;top:5px" width="18" height="18" viewBox="0 0 18 18"><defs><radialGradient id="ffg" cx=".6" cy=".25" r=".9"><stop offset="0" stop-color="#ffd23a"/><stop offset=".45" stop-color="#ff7a1a"/><stop offset="1" stop-color="#e2233e"/></radialGradient></defs><circle cx="9" cy="9.5" r="8.3" fill="url(#ffg)"/><path d="M9 0.3 Q11 3 14.5 3.5 Q13 1 9 0.3Z" fill="#ff9a1a"/><circle cx="9.3" cy="10" r="4.2" fill="#7a3fd0"/><circle cx="10.2" cy="10.4" r="2.6" fill="#ff9a1a"/></svg>
<div class="abs" style="left:368px;top:4px;width:32px;height:22px;background:#d4d0c8;border:1px solid;border-color:#fff #404040 #404040 #fff;box-shadow:inset -1px -1px 0 #808080"></div>
<svg class="abs" style="left:375.5px;top:5.5px" width="18" height="18" viewBox="-9 -9 18 18"><circle r="8.6" fill="#e33b2e"/><path d="M0 0 L-7.45 4.3 A8.6 8.6 0 0 0 3.7 7.76 Z" fill="#2da94f"/><path d="M0 0 L3.7 7.76 A8.6 8.6 0 0 0 7.45 -4.3 L0 -4.3Z" fill="#fbc116"/><path d="M-7.45 -4.3 A8.6 8.6 0 0 1 7.45 -4.3 L0 -4.3 L-3.7 2.1Z" fill="#e33b2e"/><path d="M-7.45 -4.3 L-3.7 2.1 L-7.45 4.3 A8.6 8.6 0 0 1 -7.45 -4.3Z" fill="#e33b2e"/><circle r="4.1" fill="#fff"/><circle r="3.2" fill="#3f85f0"/></svg>
<svg class="abs" style="left:410px;top:6px" width="17" height="17" viewBox="0 0 17 17"><circle cx="8.5" cy="8.5" r="8.3" fill="#e0162b"/><ellipse cx="8.5" cy="8.5" rx="3.6" ry="5.9" fill="#d4d0c8"/></svg>
<svg class="abs" style="left:443.5px;top:6px" width="17" height="17" viewBox="0 0 17 17"><circle cx="8.5" cy="8.5" r="8.3" fill="#f23c1c"/></svg>
<span class="t" style="left:447.7px;top:8.5px;font-size:12px;font-weight:700;color:#fff">Я</span>
<div class="abs" style="left:470px;top:4px;width:32px;height:22px;background:#fff;border:1px solid;border-color:#404040 #fff #fff #404040;box-shadow:inset 1px 1px 0 #808080"></div>
<svg class="abs" style="left:477px;top:6px" width="18" height="18" viewBox="0 0 18 18"><circle cx="9" cy="9" r="8" fill="#eeeeee" stroke="#dcdcdc" stroke-width=".6"/><path d="M4.6 4.4 L9 10 L13.4 4.4 M9 9.6 V14.6" fill="none" stroke="#e2202c" stroke-width="1.9"/></svg>
<div class="abs" style="left:504px;top:4px;width:32px;height:22px;background:#0c1f66;border:1px solid;border-color:#fff #404040 #404040 #fff;box-shadow:inset -1px -1px 0 #808080"></div>
<svg class="abs" style="left:510px;top:6px" width="20" height="17" viewBox="0 0 20 17"><defs><linearGradient id="b24" x1="0" y1="0" x2="0" y2="1"><stop offset="0" stop-color="#7dd0f8"/><stop offset="1" stop-color="#2fa4ea"/></linearGradient></defs><circle cx="10" cy="8.6" r="8" fill="url(#b24)"/><path d="M4.6 12.6 Q2.6 12.6 2.6 10.4 Q2.6 8.4 4.8 8.1 Q5.1 4.7 8.7 4.5 Q11.7 4.3 12.9 6.9 Q13.7 6.3 14.9 6.7 Q16.5 7.3 16.3 9.1 Q17.9 9.5 17.7 11.1 Q17.5 12.6 15.9 12.6Z" fill="#fff"/></svg>
<span class="t" style="left:516.1px;top:11.6px;font-size:7px;font-weight:700;color:#1a5ca8;letter-spacing:-.2px">24</span>
<div class="abs" style="left:538px;top:4px;width:32px;height:22px;background:#d4d0c8;border:1px solid;border-color:#fff #404040 #404040 #fff;box-shadow:inset -1px -1px 0 #808080"></div>
<svg class="abs" style="left:544px;top:7px" width="21" height="17" viewBox="0 0 21 17"><path d="M3.4 8.4 Q4.6 3 8.6 1.8 Q11.4 1.4 12.6 3.6 L6 9.4Z" fill="#0c2a4e"/><ellipse cx="10.2" cy="9" rx="8.6" ry="4.4" transform="rotate(-26 10.2 9)" fill="#1a8cff"/><ellipse cx="10.9" cy="9.7" rx="3.9" ry="1.7" transform="rotate(-26 10.9 9.7)" fill="#fff"/></svg>
<span class="t" style="left:1204.8px;top:9.7px;font-size:10.52px;color:#000;">RU</span>
<div class="abs" style="left:1224px;top:4px;width:1px;height:22px;background:#808080"></div><div class="abs" style="left:1225px;top:4px;width:1px;height:22px;background:#fff"></div>
<div class="abs" style="left:1228px;top:4px;width:130px;height:22px;border:1px solid;border-color:#808080 #fff #fff #808080"></div>
<svg class="abs" style="left:1233.5px;top:9px" width="7" height="9" viewBox="0 0 7 9"><path d="M0.6 4 L3.5 1 L6.4 4 M0.6 8 L3.5 5 L6.4 8" fill="none" stroke="#000" stroke-width="1.3"/></svg>
<svg class="abs" style="left:1252px;top:7px" width="15" height="16" viewBox="0 0 15 16"><path d="M1 5.3 H3.5 L8 1 V15 L3.5 10.7 H1Z" fill="#f4f4f4" stroke="#8a8a8a" stroke-width=".9"/><path d="M10.8 4.3 Q13.2 8 10.8 11.7" fill="none" stroke="#b5b5b5" stroke-width="1.1"/></svg>
<svg class="abs" style="left:1274px;top:7px" width="18" height="17" viewBox="0 0 18 17"><rect x="5.5" y="2.5" width="11" height="9.5" fill="#a8a6a0" stroke="#f6f6f6" stroke-width="1.3"/><rect x="8" y="13" width="6" height="1.3" fill="#fff"/><rect x="6" y="14.6" width="10" height="1.3" fill="#fff"/><path d="M2 1 V4.2 Q2 6 3.6 6 Q5.2 6 5.2 4.2 V1 M3.6 0.6 V3.5 M3.6 6 V15.5" fill="none" stroke="#3a3a3a" stroke-width="1"/></svg>
<span class="t" style="left:1305.6px;top:9.2px;font-size:11.08px;color:#000;">11:35</span>
<svg class="abs" style="left:1340.5px;top:9.5px" width="15" height="12" viewBox="0 0 15 12"><defs><linearGradient id="mg" x1="0" y1="0" x2="1" y2="1"><stop offset="0" stop-color="#1b4fb6"/><stop offset="1" stop-color="#3f97ea"/></linearGradient></defs><rect width="15" height="12" fill="url(#mg)" stroke="#9bbbe6" stroke-width=".8"/><rect x="0.5" y="9.3" width="14" height="2.2" fill="#15233f"/><rect x="1" y="9.3" width="2.6" height="2.2" fill="#f0a020"/></svg>
<!--/TB-->
</div>
</body>
</html>
